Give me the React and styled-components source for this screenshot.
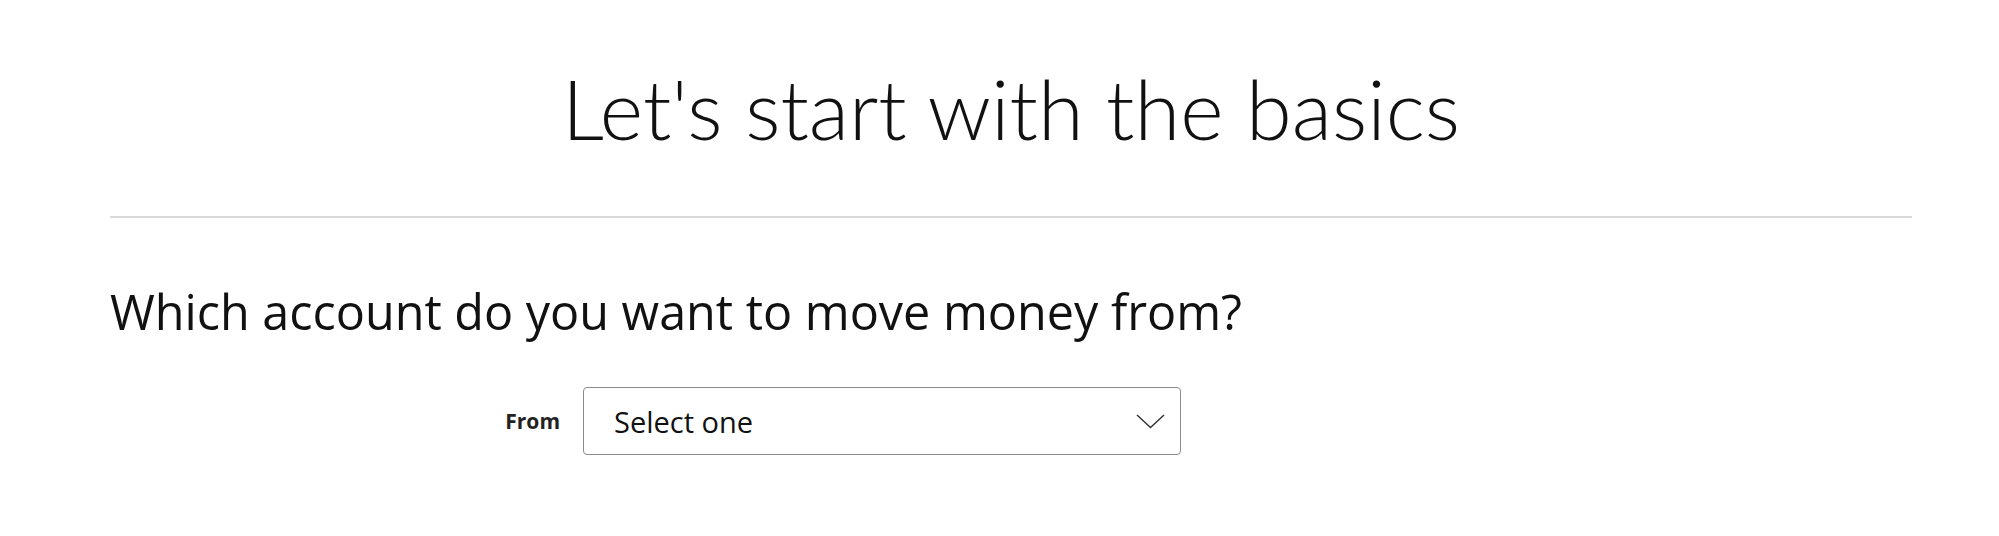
import React from "react";
import styled, { createGlobalStyle } from "styled-components";

const Global = createGlobalStyle`
  body {
    margin: 0;
    background: #fff;
    color: #000;
    font-family: "Open Sans", Lato, sans-serif;
  }
`;

const Page = styled.div`
  width: 1802px;
  padding: 0 87px 0 110px;
`;

const Title = styled.h1`
  margin: 0;
  padding-top: 59px;
  height: 216px;
  box-sizing: border-box;
  text-align: center;
  font-family: Lato, "Open Sans", sans-serif;
  font-size: 83px;
  font-weight: 300;
  line-height: 98px;
  color: #111;
`;

const Divider = styled.hr`
  margin: 0;
  border: none;
  height: 2px;
  background: #d9d9d9;
`;

const Question = styled.h2`
  margin: 0;
  padding-top: 63px;
  font-size: 48.5px;
  font-weight: 400;
  line-height: 60px;
  color: #111;
`;

const Field = styled.div`
  display: grid;
  grid-template-columns: 450px 598px;
  column-gap: 23px;
  align-items: center;
  margin-top: 46px;
`;

const Label = styled.label`
  text-align: right;
  font-size: 21px;
  font-weight: 700;
  color: #222;
`;

const Select = styled.div`
  display: flex;
  align-items: center;
  justify-content: space-between;
  height: 68px;
  box-sizing: border-box;
  padding: 0 15px 0 30px;
  border: 1px solid #8a8a8a;
  border-radius: 4px;
  font-size: 29px;
  color: #111;
`;

const Chevron = () => (
  <svg width="29" height="15" viewBox="0 0 29 15" fill="none">
    <path d="M1 1 L14.5 13.5 L28 1" stroke="#333" strokeWidth="1.5" />
  </svg>
);

export default function App() {
  return (
    <>
      <Global />
      <Page>
        <Title>Let's start with the basics</Title>
        <Divider />
        <Question>Which account do you want to move money from?</Question>
        <Field>
          <Label>From</Label>
          <Select>
            <span>Select one</span>
            <Chevron />
          </Select>
        </Field>
      </Page>
    </>
  );
}
